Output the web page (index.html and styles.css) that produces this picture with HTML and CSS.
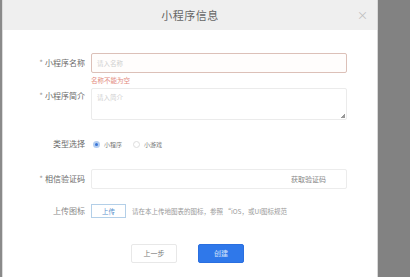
FILE: index.html
```html
<!DOCTYPE html>
<html lang="zh">
<head>
<meta charset="utf-8">
<link rel="stylesheet" href="styles.css">
</head>
<body>
<div class="screen">
  <div class="edge-left"></div>
  <div class="modal">
    <div class="header">
      <span></span>
      <span class="title">小程序信息</span>
      <span class="close">×</span>
    </div>
    <div class="form">
      <div class="row r-name">
        <label class="label"><i>*</i>小程序名称</label>
        <div class="control">
          <div class="input error">请入名称</div>
          <div class="err-msg">名称不能为空</div>
        </div>
      </div>
      <div class="row r-intro">
        <label class="label"><i>*</i>小程序简介</label>
        <div class="control">
          <div class="textarea">请入简介<span class="grip"></span></div>
        </div>
      </div>
      <div class="row r-type">
        <label class="label">类型选择</label>
        <div class="control radios">
          <span class="radio on"></span><span class="rtext">小程序</span>
          <span class="radio"></span><span class="rtext">小游戏</span>
        </div>
      </div>
      <div class="row r-code">
        <label class="label"><i>*</i>相信验证码</label>
        <div class="control">
          <div class="input code"><span></span><span class="getcode">获取验证码</span></div>
        </div>
      </div>
      <div class="row r-upload">
        <label class="label">上传图标</label>
        <div class="control upload">
          <span class="btn-upload">上传</span>
          <span class="hint">请在本上传地图表的图标，参照 “iOS，或UI图标规范</span>
        </div>
      </div>
      <div class="footer">
        <span class="btn prev">上一步</span>
        <span class="btn create">创建</span>
      </div>
    </div>
  </div>
  <div class="edge-right"></div>
</div>
</body>
</html>
```
FILE: styles.css
```css
* { box-sizing: border-box; }
html, body { margin: 0; padding: 0; }
body {
  font-family: "Noto Sans CJK SC", "Liberation Sans", sans-serif;
  color: #555;
  background: #fff;
}
.screen {
  display: flex;
  width: 410px;
  height: 277px;
}
.edge-left { width: 3px; background: #8a8a8a; border-right: 1px solid #dcdcdc; }
.edge-right { width: 33px; background: #828282; border-left: 1px solid #d8d8d8; }
.modal { flex: 1; background: #fff; display: flex; flex-direction: column; }
.header {
  height: 30px;
  background: #efefef;
  display: grid;
  grid-template-columns: 1fr auto 1fr;
  align-items: center;
}
.title { font-size: 11px; color: #666; letter-spacing: 0.5px; }
.close { justify-self: end; margin-right: 9px; font-size: 11px; color: #bdbdbd; }
.form { display: flex; flex-direction: column; padding-top: 23px; }
.row { display: grid; grid-template-columns: 82px 256px; column-gap: 6px; align-items: start; }
.label {
  font-size: 8px;
  color: #6a6a6a;
  text-align: right;
  line-height: 20px;
}
.label i { font-style: normal; color: #999; margin-right: 2px; }
.input {
  height: 20px;
  border: 1px solid #e6e6e6;
  border-radius: 2px;
  font-size: 6.5px;
  color: #cfcfcf;
  padding-left: 5px;
  line-height: 18px;
}
.input.error { border-color: #dcc0b8; background: #fffdfc; }
.err-msg { font-size: 6.5px; color: #e38b7e; line-height: 14px; }
.r-intro { margin-top: 1px; }
.r-intro .label { line-height: 16px; }
.textarea {
  position: relative;
  height: 32px;
  border: 1px solid #ebebeb;
  border-radius: 2px;
  font-size: 6.5px;
  color: #cfcfcf;
  padding: 3px 5px;
}
.grip {
  position: absolute;
  right: 1px;
  bottom: 1px;
  width: 4px;
  height: 4px;
  background: linear-gradient(135deg, transparent 50%, #999 50%);
}
.r-type { margin-top: 14px; }
.radios { display: flex; align-items: center; height: 20px; }
.radio {
  width: 7px; height: 7px;
  border-radius: 50%;
  border: 1px solid #ddd;
  margin-left: 2px;
}
.radio.on { border: 2px solid #b3cdf0; background: #3a76d8; }
.rtext { font-size: 6px; color: #777; margin: 0 9px 0 4px; }
.r-code { margin-top: 15px; }
.input.code { display: flex; justify-content: space-between; border-color: #ececec; }
.getcode { color: #888; font-size: 7px; margin-right: 20px; }
.r-upload { margin-top: 15px; }
.r-upload .label { line-height: 14px; color: #888; }
.upload { display: flex; align-items: center; height: 14px; }
.btn-upload {
  width: 35px; height: 14px;
  border: 1px solid #b3cfe8;
  color: #5a90cc;
  font-size: 6.5px;
  text-align: center;
  line-height: 12px;
}
.hint { font-size: 6.5px; color: #999; margin-left: 6px; white-space: nowrap; }
.footer { display: flex; gap: 21px; margin-top: 26px; padding-left: 128px; }
.btn {
  width: 46px; height: 19px;
  font-size: 7px;
  text-align: center;
  line-height: 17px;
  border-radius: 2px;
}
.prev { border: 1px solid #e8e8e8; color: #777; }
.create { border: 1px solid #2a6fe0; background: #2f78ea; color: #d6e4fb; }
```
